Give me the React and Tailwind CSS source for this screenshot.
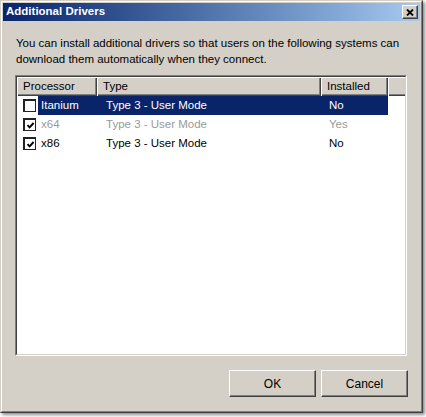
import React from "react";

const font = { fontFamily: '"Liberation Sans", Arial, sans-serif' };

const rows = [
  { proc: "Itanium", type: "Type 3 - User Mode", installed: "No", checked: false, selected: true },
  { proc: "x64", type: "Type 3 - User Mode", installed: "Yes", checked: true, disabled: true },
  { proc: "x86", type: "Type 3 - User Mode", installed: "No", checked: true },
];

const headerCell =
  "h-full flex items-center pl-[6px] bg-[#d4d0c8] shadow-[inset_1px_1px_0_#ffffff,inset_-1px_-1px_0_#404040,inset_-2px_-2px_0_#808080]";

const CheckBox = ({ checked }) => (
  <div className="w-[13px] h-[13px] bg-white border-t-2 border-l-2 border-r border-b border-[#222] flex items-center justify-center">
    {checked && (
      <svg width="9" height="9" viewBox="0 0 9 9">
        <path d="M1.5 4.2 L3.6 6.4 L7.6 2" fill="none" stroke="#000" strokeWidth="1.9" />
      </svg>
    )}
  </div>
);

const Button = ({ children }) => (
  <div className="w-[87px] h-[27px] flex items-center justify-center bg-[#d4d0c8] text-[12px] text-black border-t border-l border-white border-r border-b border-r-[#404040] border-b-[#404040] shadow-[inset_-1px_-1px_0_#808080]">
    {children}
  </div>
);

export default function App() {
  return (
    <div className="w-[426px] h-[417px] bg-white" style={font}>
      <div className="w-[423px] h-[413px] bg-[#d4d0c8] border border-t-[#d4d0c8] border-l-[#d4d0c8] border-r-[#404040] border-b-[#404040] shadow-[2px_2px_3px_rgba(0,0,0,0.45)]">
        <div className="h-full border border-t-white border-l-white border-r-[#808080] border-b-[#808080] p-[1px] flex flex-col">
          {/* title bar */}
          <div className="h-[18px] flex items-center justify-between bg-gradient-to-r from-[#0a246a] to-[#a6caf0]">
            <span className="pl-[3px] text-white font-bold text-[11.5px]">Additional Drivers</span>
            <div className="mr-[2px] w-[16px] h-[14px] flex items-center justify-center bg-[#d4d0c8] border-t border-l border-white border-r border-b border-r-[#404040] border-b-[#404040] shadow-[inset_-1px_-1px_0_#808080]">
              <svg width="8" height="7" viewBox="0 0 8 7">
                <path d="M1 0.5 L7 6.5 M7 0.5 L1 6.5" stroke="#000" strokeWidth="1.8" />
              </svg>
            </div>
          </div>

          <p className="mt-[14px] ml-[13px] text-[11.5px] leading-[16px] text-black">
            You can install additional drivers so that users on the following systems can
            <br />
            download them automatically when they connect.
          </p>

          {/* list */}
          <div className="mt-[8px] ml-[12px] w-[392px] h-[281px] border border-t-[#808080] border-l-[#808080] border-r-white border-b-white">
            <div className="h-full border border-t-[#404040] border-l-[#404040] border-r-[#d4d0c8] border-b-[#d4d0c8] bg-white text-[11.5px]">
              <div className="h-[19px] flex text-black">
                <div className={`w-[80px] ${headerCell}`}>Processor</div>
                <div className={`w-[224px] ${headerCell}`}>Type</div>
                <div className={`w-[67px] ${headerCell}`}>Installed</div>
                <div className="flex-1 h-full bg-[#d4d0c8] shadow-[inset_1px_1px_0_#ffffff,inset_0_-1px_0_#404040,inset_0_-2px_0_#808080]" />
              </div>
              {rows.map((r) => (
                <div key={r.proc} className="h-[19px] flex items-center">
                  <div className="w-[21px] h-full flex items-center pl-[6px]">
                    <CheckBox checked={r.checked} />
                  </div>
                  <div
                    className={`w-[350px] h-full flex items-center ${
                      r.selected ? "bg-[#0a246a] text-white" : r.disabled ? "text-[#9a9a9a]" : "text-black"
                    }`}
                  >
                    <span className="w-[67px] pl-[3px]">{r.proc}</span>
                    <span className="w-[223px] pl-[1px]">{r.type}</span>
                    <span className="pl-[1px]">{r.installed}</span>
                  </div>
                </div>
              ))}
            </div>
          </div>

          <div className="mt-[14px] mr-[12px] flex justify-end gap-[5px]">
            <Button>OK</Button>
            <Button>Cancel</Button>
          </div>
        </div>
      </div>
    </div>
  );
}
